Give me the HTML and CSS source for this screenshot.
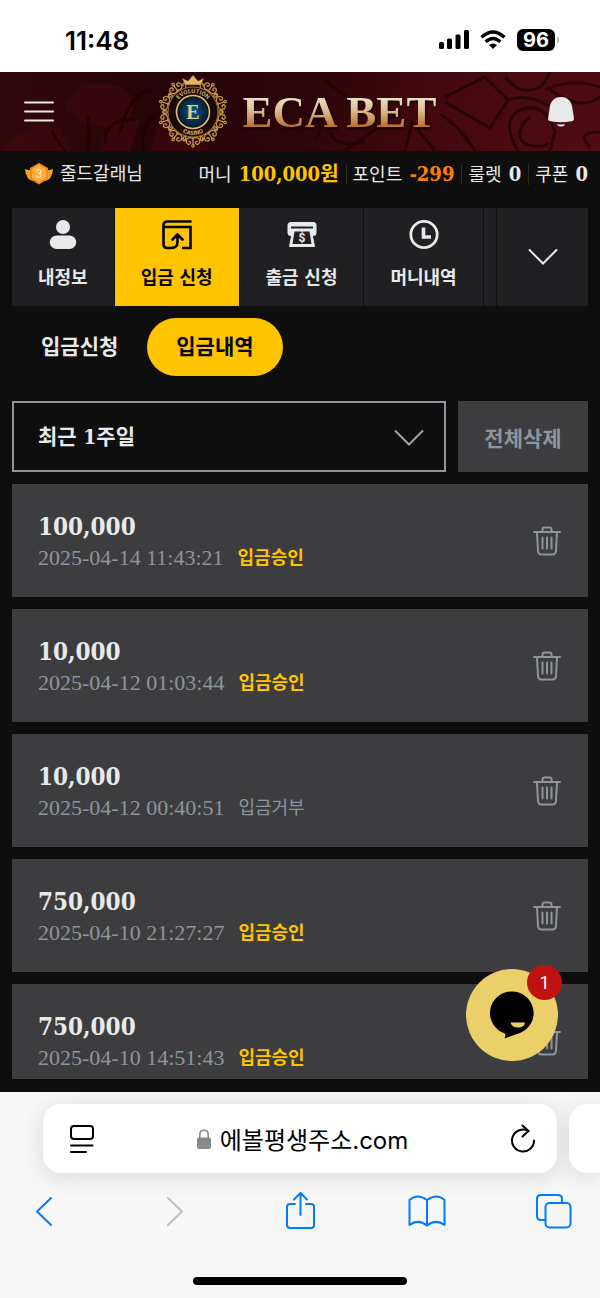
FILE: index.html
```html
<!DOCTYPE html>
<html lang="ko">

<head>
    <meta charset="UTF-8">
    <meta name="viewport" content="width=device-width, initial-scale=1.0">
    <title>ECA BET</title>
    <link rel="stylesheet" href="styles.css">
</head>

<body>
    <!-- icons used more than once -->
    <svg class="sprite" aria-hidden="true">
        <symbol id="trash" viewBox="0 0 28 30">
            <g fill="none" stroke="currentColor" stroke-width="2" stroke-linecap="round" stroke-linejoin="round">
                <path d="M1 6H27M9.500 5.500V3.500Q9.500 1.500 11.500 1.500H16.500Q18.500 1.500 18.500 3.500V5.500" />
                <path d="M4 6.500L5 25Q5.300 28.500 8.500 28.500H19.500Q22.700 28.500 23 25L24 6.500" />
                <path d="M9.500 11.500V22.500M14 11.500V22.500M18.500 11.500V22.500" />
            </g>
        </symbol>
        <symbol id="down" viewBox="0 0 30 18">
            <path d="M1.500 2L15 15.500L28.500 2" fill="none" stroke="currentColor" stroke-width="2" stroke-linecap="round" />
        </symbol>
        <symbol id="curl" viewBox="0 0 24 14">
            <g fill="none" stroke="#bf9548" stroke-width="1.300">
                <path d="M12 13V4M12 9Q9 12 6 9Q4 5 7.500 3.500Q10.500 4 9 6.500Q8 7 7.500 6M12 9Q15 12 18 9Q20 5 16.500 3.500Q13.500 4 15 6.500Q16 7 16.500 6" />
                <path d="M12 4Q9.500 2 12 .8Q14.500 2 12 4M4 12Q1 10 2.500 7.500Q5 7 4.500 9.500M20 12Q23 10 21.500 7.500Q19 7 19.500 9.500M4 12.500Q8 11 12 13Q16 11 20 12.500" />
            </g>
        </symbol>
    </svg>

    <div class="status">
        <span class="time">11:48</span>
        <div class="signals">
            <svg width="30" height="20" viewBox="0 0 30 20">
                <rect x="0" y="12" width="5" height="7" rx="1.500" />
                <rect x="8" y="8.500" width="5" height="10.500" rx="1.500" />
                <rect x="16.500" y="4.500" width="5" height="14.500" rx="1.500" />
                <rect x="25" y="0" width="5" height="19" rx="1.500" />
            </svg>
            <svg width="26" height="20" viewBox="0 0 26 20">
                <g fill="none" stroke="#000" stroke-width="3.400">
                    <path d="M1.500 7.200Q13-3.300 24.500 7.200" />
                    <path d="M5.600 11.800Q13 5.200 20.400 11.800" />
                </g>
                <path d="M9 15Q13 11.800 17 15L13 19Z" />
            </svg>
            <span class="battery">96</span>
        </div>
    </div>

    <header class="header">
        <svg class="pattern" viewBox="0 0 600 79" preserveAspectRatio="none" aria-hidden="true">
            <g fill="#4a0810" opacity=".45">
                <path d="M65 38Q75 8 108 12Q145 20 128 48Q100 62 80 48ZM0 79Q20 50 60 55L70 79ZM100 79Q105 42 140 48L130 79ZM160 45Q190 35 210 79H150Z" />
            </g>
            <g fill="none" stroke="#1e0206" stroke-width="3" opacity=".75">
                <path d="M52 60L65 79M88 45Q90 65 88 79M105 72Q105 45 135 48M120 60Q130 20 152 18M143 79Q140 50 156 44M300 40Q330 50 315 68M325 8L350 28M345 79L400 40M405 79L412 50L435 79M445 25L485 5L508 28L490 56L445 30M440 42Q460 55 475 79M365 70Q335 76 330 60" />
                <path d="M505 5Q520 25 540 15Q555 0 545-5M545 18Q570 5 600 15M550 18Q580 40 600 25M518 79Q500 48 520 38Q545 28 555 60L550 79M508 28Q530 20 555 38M530 45Q512 60 525 72Q545 78 548 70M590 75Q575 60 600 60" />
            </g>
        </svg>
        <button class="icon-btn menu" aria-label="메뉴">
            <svg width="30" height="22" viewBox="0 0 30 22">
                <path d="M1 1.500H29M1 10.500H29M1 19.500H29" stroke="#e8e9ea" stroke-width="2" stroke-linecap="round" />
            </svg>
        </button>
        <a href="#" class="logo">
            <svg width="72" height="74" viewBox="0 0 72 74">
                <defs>
                    <radialGradient id="blue">
                        <stop offset="0" stop-color="#075994" />
                        <stop offset="1" stop-color="#071522" />
                    </radialGradient>
                    <path id="arcTop" d="M17 37A19 19 0 0 1 55 37" />
                    <path id="arcBottom" d="M13 37A23 23 0 0 0 59 37" />
                </defs>
                <use href="#curl" x="24" y="1" width="24" height="14" transform="rotate(36 36 37)" />
                <use href="#curl" x="24" y="1" width="24" height="14" transform="rotate(72 36 37)" />
                <use href="#curl" x="24" y="1" width="24" height="14" transform="rotate(108 36 37)" />
                <use href="#curl" x="24" y="1" width="24" height="14" transform="rotate(144 36 37)" />
                <use href="#curl" x="24" y="1" width="24" height="14" transform="rotate(180 36 37)" />
                <use href="#curl" x="24" y="1" width="24" height="14" transform="rotate(216 36 37)" />
                <use href="#curl" x="24" y="1" width="24" height="14" transform="rotate(252 36 37)" />
                <use href="#curl" x="24" y="1" width="24" height="14" transform="rotate(288 36 37)" />
                <use href="#curl" x="24" y="1" width="24" height="14" transform="rotate(324 36 37)" />
                <path d="M25 3L31 6L36 0L41 6L47 3L44 10H28Z" fill="#e0b65c" stroke="#5a3512" stroke-width=".6" />
                <circle cx="36" cy="37" r="25" fill="#1d0609" stroke="#8f6a30" stroke-width="1" />
                <circle cx="36" cy="37" r="16.500" fill="url(#blue)" stroke="#e3bc70" stroke-width="1.600" />
                <text class="ring-text"><textPath href="#arcTop" startOffset="50%">EVOLUTION</textPath></text>
                <text class="ring-text"><textPath href="#arcBottom" startOffset="50%">CASINO</textPath></text>
                <text x="36" y="44" class="ring-letter">E</text>
            </svg>
            <span class="brand">ECA BET</span>
        </a>
        <button class="icon-btn" aria-label="알림">
            <svg width="28" height="30" viewBox="0 0 28 30" fill="#e8e9ea">
                <path d="M14 0C6 0 3 6 2.500 12L1 22Q1 24 3.500 24.300Q14 26 24.500 24.300Q27 24 27 22L25.500 12C25 6 22 0 14 0Z" />
                <path d="M10 27Q14 28 18 27Q17.500 29.500 14 29.500Q10.500 29.500 10 27Z" />
            </svg>
        </button>
    </header>

    <div class="account">
        <div class="user">
            <svg width="30" height="22" viewBox="0 0 30 22">
                <path d="M1 6Q6 8 9 7V18Q3 16 3 13Q1 10 1 6ZM29 6Q24 8 21 7V18Q27 16 27 13Q29 10 29 6Z" fill="#f5a51c" />
                <path d="M15 0L24 5V16L15 21.500L6 16V5Z" fill="#f08a1d" />
                <path d="M15 2L22 6V15L15 19.500L8 15V6Z" fill="#ffac3c" />
                <text x="15" y="15" class="medal-num">3</text>
            </svg>
            <span>줄드갈래님</span>
        </div>
        <ul class="stats">
            <li>머니 <strong class="money">100,000원</strong></li>
            <li>포인트 <strong class="minus">-299</strong></li>
            <li>룰렛 <strong>0</strong></li>
            <li>쿠폰 <strong>0</strong></li>
        </ul>
    </div>

    <main class="page">
        <div class="tabs">
            <nav class="tab-list">
                <a href="#" class="tab">
                    <svg width="30" height="30" viewBox="0 0 30 30" fill="currentColor">
                        <circle cx="15" cy="7" r="7" />
                        <rect x="1.800" y="15.500" width="26.400" height="13.500" rx="6.700" />
                    </svg>
                    <span>내정보</span>
                </a>
                <a href="#" class="tab active">
                    <svg width="30" height="30" viewBox="0 0 30 30" fill="none" stroke="currentColor" stroke-width="2.600">
                        <path d="M29.500 1.500H5.500Q1.500 1.500 1.500 5.500V24Q1.500 28 5.500 28H9.500Q15.500 28 15.500 22V15" />
                        <path d="M2 7H28.500V28H20" />
                        <path d="M10.500 19.500L15.500 14.500L20.500 19.500" stroke-linecap="round" stroke-linejoin="round" />
                    </svg>
                    <span>입금 신청</span>
                </a>
                <a href="#" class="tab">
                    <svg width="30" height="30" viewBox="0 0 30 30">
                        <path d="M4 2H26Q29.500 2 29.500 5.500V12.500Q29.500 16 26 16H4Q.5 16 .5 12.500V5.500Q.5 2 4 2Z" fill="currentColor" />
                        <path d="M6 9H24L27.500 26.500H2.500Z" fill="currentColor" stroke="currentColor" stroke-linejoin="round" />
                        <path d="M4 7.500H26" stroke="#202022" stroke-width="2" />
                        <path d="M7.500 11.500H22.500L24.500 24H5.500Z" fill="#202022" />
                        <text x="15" y="22" class="coin">$</text>
                    </svg>
                    <span>출금 신청</span>
                </a>
                <a href="#" class="tab">
                    <svg width="30" height="30" viewBox="0 0 30 30" fill="none" stroke="currentColor">
                        <circle cx="15" cy="14.500" r="13.200" stroke-width="2.800" />
                        <path d="M14.500 7.500V17H22" stroke-width="3.600" />
                    </svg>
                    <span>머니내역</span>
                </a>
                <a href="#" class="tab next" aria-label="다음 메뉴"></a>
            </nav>
            <button class="tab-more" aria-label="더보기">
                <svg width="30" height="18"><use href="#down" /></svg>
            </button>
        </div>

        <nav class="subtabs">
            <a href="#">입금신청</a>
            <a href="#" class="active">입금내역</a>
        </nav>

        <div class="filter">
            <div class="period">
                <select aria-label="조회 기간">
                    <option>최근 1주일</option>
                </select>
                <svg width="30" height="18"><use href="#down" /></svg>
            </div>
            <button class="delete-all">전체삭제</button>
        </div>

        <ul class="history">
            <li>
                <div>
                    <p class="amount">100,000</p>
                    <p class="detail"><time>2025-04-14 11:43:21</time><span class="ok">입금승인</span></p>
                </div>
                <button class="icon-btn" aria-label="삭제"><svg width="28" height="30"><use href="#trash" /></svg></button>
            </li>
            <li>
                <div>
                    <p class="amount">10,000</p>
                    <p class="detail"><time>2025-04-12 01:03:44</time><span class="ok">입금승인</span></p>
                </div>
                <button class="icon-btn" aria-label="삭제"><svg width="28" height="30"><use href="#trash" /></svg></button>
            </li>
            <li>
                <div>
                    <p class="amount">10,000</p>
                    <p class="detail"><time>2025-04-12 00:40:51</time><span>입금거부</span></p>
                </div>
                <button class="icon-btn" aria-label="삭제"><svg width="28" height="30"><use href="#trash" /></svg></button>
            </li>
            <li>
                <div>
                    <p class="amount">750,000</p>
                    <p class="detail"><time>2025-04-10 21:27:27</time><span class="ok">입금승인</span></p>
                </div>
                <button class="icon-btn" aria-label="삭제"><svg width="28" height="30"><use href="#trash" /></svg></button>
            </li>
            <li>
                <div>
                    <p class="amount">750,000</p>
                    <p class="detail"><time>2025-04-10 14:51:43</time><span class="ok">입금승인</span></p>
                </div>
                <button class="icon-btn" aria-label="삭제"><svg width="28" height="30"><use href="#trash" /></svg></button>
            </li>
        </ul>

        <button class="chat" aria-label="상담">
            <svg width="44" height="48" viewBox="0 0 44 48">
                <path d="M22 0.500A21.500 21.500 0 0 1 30 42Q22 44.500 14.500 47.500Q16 44.500 15 42.500A21.500 21.500 0 0 1 22 .5Z" />
                <path d="M20.500 31.500H35Q34.500 36.500 28 36.500Q22 36.500 20.500 31.500Z" fill="#ebcf68" />
            </svg>
            <span class="badge">1</span>
        </button>
    </main>

    <footer class="browser">
        <div class="address-row">
            <div class="address">
                <button class="icon-btn" aria-label="페이지 메뉴">
                    <svg width="26" height="30" viewBox="0 0 26 30" fill="none" stroke="#000" stroke-width="2" stroke-linecap="round">
                        <rect x="2" y="2" width="22" height="13" rx="3" />
                        <path d="M2 21.500H23.500M2 28H17" />
                    </svg>
                </button>
                <button class="url">
                    <svg width="14" height="20" viewBox="0 0 14 20">
                        <rect x="0" y="8.500" width="14" height="11.500" rx="2" fill="#8a8a8e" />
                        <path d="M2.800 9V5.500Q2.800 1.200 7 1.200Q11.200 1.200 11.200 5.500V9" fill="none" stroke="#8a8a8e" stroke-width="1.600" />
                    </svg>
                    <span>에볼평생주소.com</span>
                </button>
                <button class="icon-btn" aria-label="새로고침">
                    <svg width="26" height="30" viewBox="0 0 26 30" fill="none" stroke="#000" stroke-width="2" stroke-linecap="round" stroke-linejoin="round">
                        <path d="M24 16.500A11 11 0 1 1 18.500 7" />
                        <path d="M12.500 1.500L18.500 7L12.500 12.500" />
                    </svg>
                </button>
            </div>
            <div class="next-page"></div>
        </div>
        <nav class="toolbar">
            <button class="icon-btn" aria-label="뒤로">
                <svg width="40" height="40" viewBox="0 0 40 40"><path d="M27 7L13 20.500L27 34" /></svg>
            </button>
            <button class="icon-btn forward" aria-label="앞으로">
                <svg width="40" height="40" viewBox="0 0 40 40"><path d="M16 7L30 20.500L16 34" /></svg>
            </button>
            <button class="icon-btn" aria-label="공유">
                <svg width="40" height="40" viewBox="0 0 40 40"><path d="M16 13H11Q8 13 8 16V34Q8 37 11 37H32Q35 37 35 34V16Q35 13 32 13H27M21.500 24V2.500M15 8.500L21.500 2L28 8.500" /></svg>
            </button>
            <button class="icon-btn" aria-label="책갈피">
                <svg width="40" height="40" viewBox="0 0 40 40"><path d="M20 9Q10 2 2.500 9V34Q11 27.500 20 34.500Q29 27.500 37.500 34V9Q30 2 20 9V34" /></svg>
            </button>
            <button class="icon-btn" aria-label="탭">
                <svg width="40" height="40" viewBox="0 0 40 40"><path d="M11 29H7Q3 29 3 25V8Q3 4 7 4H24Q28 4 28 8V12" /><rect x="11.500" y="12" width="25" height="24.500" rx="4" /></svg>
            </button>
        </nav>
        <div class="home-bar"></div>
    </footer>
</body>

</html>
```
FILE: styles.css
```css
* {
    box-sizing: border-box;
}

body {
    display: flex;
    flex-direction: column;
    height: 100vh;
    margin: 0;
    font-family: "DejaVu Serif Condensed", "Noto Sans CJK KR", sans-serif;
    font-size: 18px;
    background-color: #0e0e0e;
    color: #e8e9ea;
}

ul {
    margin: 0;
    padding: 0;
    list-style: none;
}

p {
    margin: 0;
}

a {
    color: inherit;
    text-decoration: none;
}

button,
select {
    font: inherit;
    color: inherit;
    border: none;
    border-radius: 0;
    background: none;
    padding: 0;
    cursor: pointer;
}

svg {
    display: block;
    flex: none;
}

.sprite {
    position: absolute;
    width: 0;
    height: 0;
}

/* phone status bar */
.status {
    display: flex;
    justify-content: space-between;
    align-items: center;
    height: 72px;
    padding: 8px 45px 0 65px;
    background-color: #fff;
    color: #000;
    font-family: Inter, sans-serif;
    flex: none;
}

.time {
    font-size: 26px;
    font-weight: 600;
}

.signals {
    display: flex;
    align-items: center;
    gap: 11px;
}

.battery {
    width: 38px;
    border-radius: 6px;
    background-color: #000;
    color: #fff;
    font-size: 20px;
    font-weight: 700;
    line-height: 22px;
    text-align: center;
    position: relative;
}

.battery::after {
    content: "";
    position: absolute;
    top: 8px;
    right: -4px;
    width: 2px;
    height: 6px;
    border-radius: 0 2px 2px 0;
    background-color: #b5b5b5;
}

/* site header */
.header {
    position: relative;
    display: flex;
    justify-content: space-between;
    align-items: center;
    height: 79px;
    padding: 0 25px 0 24px;
    background: linear-gradient(100deg, #32090d, #25040a 25%, #2b050a 50%, #42080e 70%, #500c12);
    flex: none;
}

.pattern {
    position: absolute;
    inset: 0;
    width: 100%;
    height: 100%;
}

.header .icon-btn,
.logo {
    position: relative;
}

.logo {
    display: flex;
    align-items: center;
    gap: 14px;
    margin-right: 8px;
}

.brand {
    font-family: "Liberation Serif", serif;
    font-size: 45px;
    font-weight: 700;
    line-height: 50px;
    color: transparent;
    background: linear-gradient(#eee0c4 22%, #d9bb8c 48%, #b87333 78%);
    background-clip: text;
    -webkit-background-clip: text;
    filter: drop-shadow(1px 2px 1px #120204);
}

.ring-text {
    font-family: Roboto, sans-serif;
    font-size: 6px;
    font-weight: 700;
    text-anchor: middle;
    fill: #d5ad60;
}

.ring-letter {
    font-family: "Liberation Serif", serif;
    font-size: 20px;
    font-weight: 700;
    text-anchor: middle;
    fill: #e9c88a;
}

/* user and balance */
.account {
    display: flex;
    justify-content: space-between;
    align-items: center;
    height: 46px;
    padding: 0 12px 0 24px;
    flex: none;
}

.user {
    display: flex;
    align-items: center;
    gap: 6px;
    line-height: 20px;
}

.medal-num {
    font-family: Roboto, sans-serif;
    font-size: 12px;
    text-anchor: middle;
    fill: #fff0c8;
}

.stats {
    display: flex;
    white-space: nowrap;
}

.stats li {
    line-height: 20px;
}

.stats li + li {
    margin-left: 7px;
    padding-left: 6px;
    border-left: 1px solid #2a2a2c;
}

.stats strong {
    margin-left: 2px;
    font-size: 20px;
}

.money {
    color: #ffc400;
}

.minus {
    color: #ff8000;
}

.page {
    position: relative;
    display: flex;
    flex-direction: column;
    flex: 1;
    min-height: 0;
    padding: 11px 12px 13px;
}

/* main tabs */
.tabs {
    display: flex;
    gap: 1px;
    height: 98px;
    flex: none;
}

.tab-list {
    display: flex;
    flex: 1;
    gap: 1px;
    overflow: hidden;
}

.tab {
    display: flex;
    flex-direction: column;
    align-items: center;
    gap: 6px;
    padding: 12px 26px 0;
    background-color: #202022;
    font-weight: 700;
    white-space: nowrap;
    line-height: 44px;
}

.tab.active {
    background-color: #ffc400;
    color: #000;
}

.tab.next {
    flex: 1;
    padding: 0;
}

.coin {
    font-family: Roboto, sans-serif;
    font-size: 12px;
    font-weight: 700;
    text-anchor: middle;
    fill: currentColor;
}

.tab-more {
    display: flex;
    justify-content: center;
    align-items: center;
    width: 91px;
    background-color: #202022;
}

/* sub tabs */
.subtabs {
    display: flex;
    margin: 12px 0 25px;
    font-size: 21px;
    font-weight: 700;
    line-height: 58px;
    flex: none;
}

.subtabs a {
    padding: 0 29px;
    border-radius: 29px;
}

.subtabs .active {
    background-color: #ffc400;
    color: #000;
}

/* period select and delete button */
.filter {
    display: flex;
    gap: 12px;
    height: 71px;
    font-size: 21px;
    font-weight: 700;
    flex: none;
}

.period {
    position: relative;
    flex: 1;
}

.period select {
    width: 100%;
    height: 100%;
    padding: 0 24px;
    border: 2px solid #8e959d;
    appearance: none;
}

.period svg {
    position: absolute;
    top: 28px;
    right: 22px;
    color: #9da3ab;
    pointer-events: none;
}

.delete-all {
    width: 130px;
    background-color: #3d3d3f;
    color: #8e959d;
}

/* deposit history */
.history {
    display: flex;
    flex-direction: column;
    gap: 12px;
    flex: 1;
    min-height: 0;
    margin-top: 12px;
    overflow: hidden;
}

.history li {
    display: flex;
    justify-content: space-between;
    align-items: center;
    min-height: 113px;
    padding: 0 27px 0 26px;
    background-color: #3d3d3f;
    color: #8e959d;
    flex: none;
}

.amount {
    padding-top: 3px;
    font-size: 24px;
    font-weight: 700;
    line-height: 32px;
    color: #e8e9ea;
}

.detail {
    display: flex;
    align-items: center;
    gap: 14px;
    line-height: 30px;
}

.detail time {
    font-family: "Liberation Serif", serif;
    font-size: 22px;
}

.ok {
    color: #ffc400;
    font-weight: 700;
}

/* chat bubble over the list */
.chat {
    position: absolute;
    right: 42px;
    bottom: 31px;
    display: flex;
    justify-content: center;
    align-items: center;
    width: 92px;
    height: 92px;
    border-radius: 50%;
    background-color: #ebcf68;
}

.badge {
    position: absolute;
    top: -4px;
    right: -4px;
    width: 35px;
    border-radius: 50%;
    background-color: #bf1212;
    color: #fff;
    font-family: Roboto, sans-serif;
    font-size: 18px;
    line-height: 35px;
}

/* browser bar */
.browser {
    height: 206px;
    padding-top: 12px;
    background-color: #f7f7f7;
    flex: none;
    overflow: hidden;
}

.address-row {
    display: flex;
    gap: 12px;
    padding-left: 43px;
}

.address,
.next-page {
    height: 69px;
    background-color: #fff;
    box-shadow: 0 4px 24px rgba(0, 0, 0, .12);
}

.address {
    display: flex;
    justify-content: space-between;
    align-items: center;
    flex: 1;
    padding: 0 21px 0 26px;
    border-radius: 18px;
}

.next-page {
    width: 31px;
    border-radius: 18px 0 0 18px;
}

.url {
    display: flex;
    align-items: center;
    gap: 9px;
    color: #000;
    font-family: Inter, "Noto Sans CJK KR", sans-serif;
    font-size: 24px;
}

.toolbar {
    display: flex;
    justify-content: space-between;
    padding: 18px 26px 0 24px;
}

.toolbar svg {
    fill: none;
    stroke: #007aff;
    stroke-width: 2;
    stroke-linecap: round;
    stroke-linejoin: round;
}

.toolbar .forward svg {
    stroke: #bfbfbf;
}

.home-bar {
    width: 214px;
    height: 8px;
    margin: 46px auto 0;
    border-radius: 4px;
    background-color: #000;
}
```
